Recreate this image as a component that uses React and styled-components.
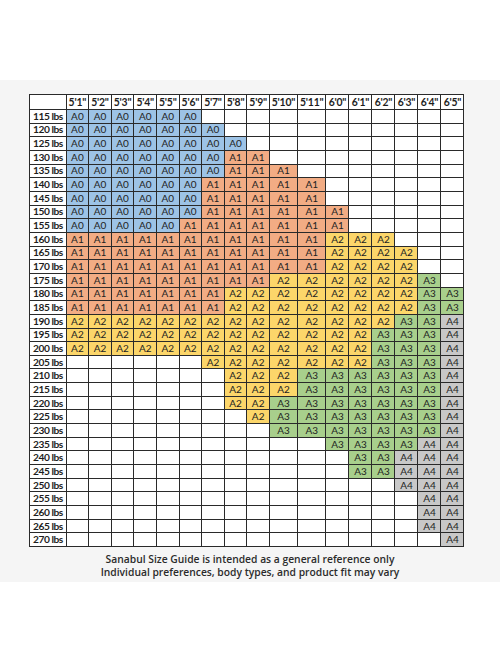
import React from 'react';
import styled, { createGlobalStyle } from 'styled-components';

const GlobalStyle = createGlobalStyle`
  html, body {
    margin: 0;
    padding: 0;
    background: #ffffff;
  }
`;

const Page = styled.div`
  width: 500px;
  height: 667px;
  padding-top: 80px;
  box-sizing: border-box;
  background: #ffffff;
`;

const Band = styled.section`
  height: 502px;
  background: #f5f5f5;
  padding: 14px 0 0 29px;
  box-sizing: border-box;
`;

const Chart = styled.table`
  border-collapse: collapse;
  table-layout: fixed;
  width: 435px;
  background: #ffffff;
  font-family: Lato, 'Liberation Sans', sans-serif;
  color: #1e1e1e;
`;

const HeadRow = styled.tr`
  height: 15px;
`;

const Row = styled.tr`
  height: 13.66px;
`;

const HeadCell = styled.th`
  border: 1px solid #2a2a2a;
  padding: 0;
  font-size: 10.4px;
  font-weight: 700;
  line-height: 12px;
  letter-spacing: -0.2px;
  text-align: center;
  white-space: nowrap;
  overflow: hidden;
`;

const WeightCell = styled.th`
  border: 1px solid #2a2a2a;
  padding: 0 0 0 3px;
  font-size: 10.2px;
  font-weight: 700;
  line-height: 11px;
  letter-spacing: -0.45px;
  text-align: left;
  white-space: nowrap;
  overflow: hidden;
`;

const sizeColors = {
  0: '#9dc3e6',
  1: '#f2ac84',
  2: '#fcd66a',
  3: '#a8cf8c',
  4: '#c8c8c8',
};

const SizeCell = styled.td`
  border: 1px solid #2a2a2a;
  padding: 0;
  font-size: 10px;
  line-height: 11px;
  text-align: center;
  background: ${(p) => (p.$size !== undefined ? sizeColors[p.$size] : '#ffffff')};
  color: #222;
`;

const Note = styled.p`
  margin: 6px 0 0 -29px;
  text-align: center;
  font-family: 'Open Sans', 'Liberation Sans', sans-serif;
  font-size: 10.3px;
  font-weight: 600;
  line-height: 13px;
  color: #2b2b2b;
`;

const heights = [
  `5'1"`, `5'2"`, `5'3"`, `5'4"`, `5'5"`, `5'6"`, `5'7"`, `5'8"`, `5'9"`,
  `5'10"`, `5'11"`, `6'0"`, `6'1"`, `6'2"`, `6'3"`, `6'4"`, `6'5"`,
];

const colWidths = [
  22.6, 22.6, 22.6, 22.6, 22.6, 22.6, 22.6, 22.6, 22.6,
  28, 28.5, 23, 23, 23, 23, 23, 23,
];

// one char per height column: '.' empty, digit = A-size
const rows = [
  [115, '000000...........'],
  [120, '0000000..........'],
  [125, '00000000.........'],
  [130, '000000011........'],
  [135, '0000000111.......'],
  [140, '00000011111......'],
  [145, '00000011111......'],
  [150, '000000111111.....'],
  [155, '000001111111.....'],
  [160, '11111111111222...'],
  [165, '111111111112222..'],
  [170, '111111111112222..'],
  [175, '1111111112222223.'],
  [180, '11111112222222233'],
  [185, '11111112222222233'],
  [190, '22222222222222334'],
  [195, '22222222222223334'],
  [200, '22222222222223334'],
  [205, '......22222223334'],
  [210, '.......2223333334'],
  [215, '.......2223333334'],
  [220, '.......2233333334'],
  [225, '........233333334'],
  [230, '.........33333334'],
  [235, '...........333344'],
  [240, '............33444'],
  [245, '............33444'],
  [250, '..............444'],
  [255, '...............44'],
  [260, '...............44'],
  [265, '...............44'],
  [270, '................4'],
];

export default function App() {
  return (
    <Page>
      <GlobalStyle />
      <Band>
        <Chart>
          <colgroup>
            <col style={{ width: 36.6 }} />
            {colWidths.map((w, i) => (
              <col key={i} style={{ width: w }} />
            ))}
          </colgroup>
          <thead>
            <HeadRow>
              <HeadCell />
              {heights.map((h) => (
                <HeadCell key={h}>{h}</HeadCell>
              ))}
            </HeadRow>
          </thead>
          <tbody>
            {rows.map(([lbs, sizes]) => (
              <Row key={lbs}>
                <WeightCell>{lbs} lbs</WeightCell>
                {sizes.split('').map((s, i) =>
                  s === '.' ? (
                    <SizeCell key={i} />
                  ) : (
                    <SizeCell key={i} $size={Number(s)}>A{s}</SizeCell>
                  )
                )}
              </Row>
            ))}
          </tbody>
        </Chart>
        <Note>
          Sanabul Size Guide is intended as a general reference only
          <br />
          Individual preferences, body types, and product fit may vary
        </Note>
      </Band>
    </Page>
  );
}
